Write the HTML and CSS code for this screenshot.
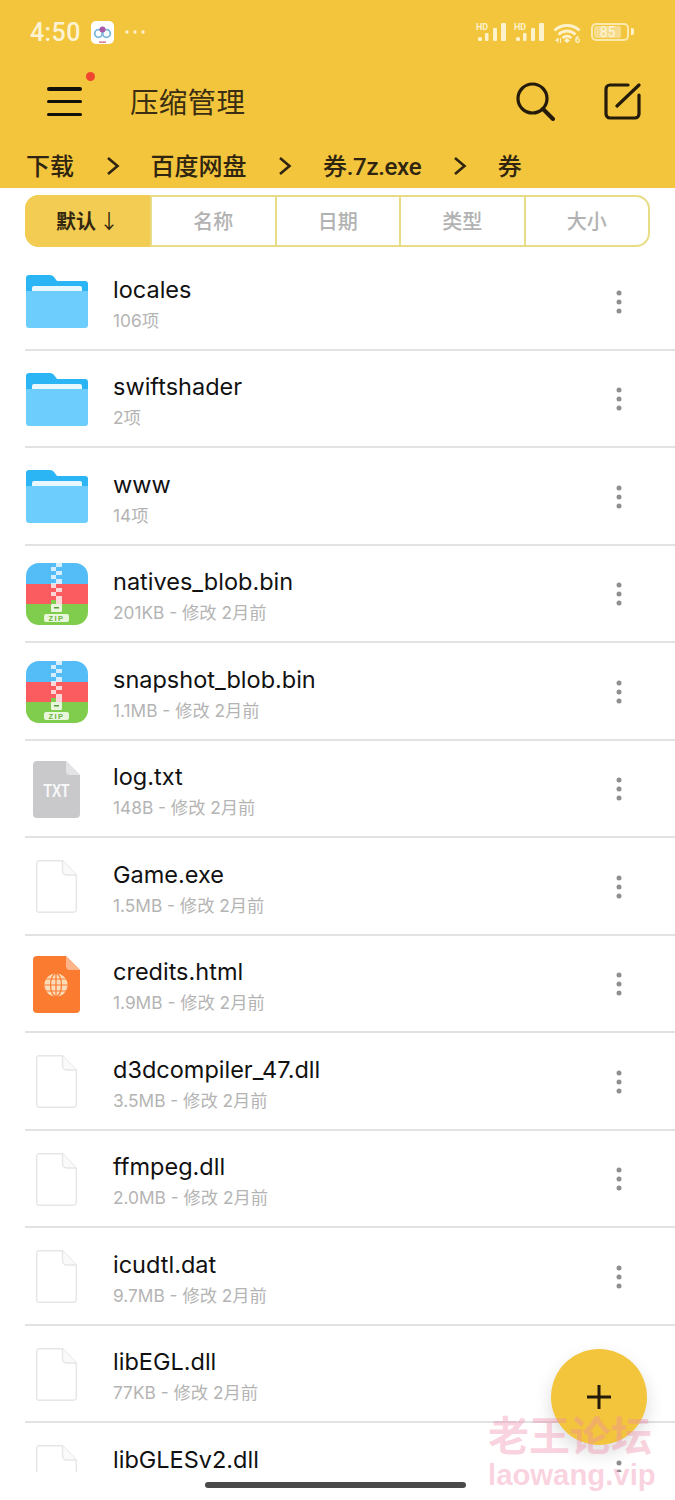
FILE: index.html
```html
<!DOCTYPE html>
<html lang="zh">
<head>
<meta charset="utf-8">
<title>压缩管理</title>
<link rel="stylesheet" href="styles.css">
</head>
<body>
<svg class="sprite" xmlns="http://www.w3.org/2000/svg">
  <symbol id="folder" viewBox="0 0 62 53">
    <path d="M0 3a3 3 0 0 1 3-3h21c2 0 3 1 4 2l3 4h28a3 3 0 0 1 3 3v10H0z" fill="#2cb5f5"/>
    <rect x="6" y="11" width="50" height="10" rx="2" fill="#e9f7fe"/>
    <path d="M0 16h62v34a3 3 0 0 1-3 3H3a3 3 0 0 1-3-3z" fill="#6dcdfd"/>
  </symbol>
  <symbol id="zip" viewBox="0 0 62 62">
    <path d="M13 0h36a13 13 0 0 1 13 13v8H0v-8A13 13 0 0 1 13 0z" fill="#54bdf7"/>
    <rect y="21" width="62" height="21" fill="#fb5c5f"/>
    <path d="M0 41h62v8a13 13 0 0 1-13 13H13A13 13 0 0 1 0 49z" fill="#80cc4d"/>
    <rect x="25" width="11" height="46" fill="#fff" opacity=".75"/>
    <path d="M25 0h5v4h-5zM30 4h6v4h-6zM25 8h5v4h-5zM30 12h6v4h-6zM25 16h5v4h-5z" fill="#54bdf7"/>
    <path d="M30 21h6v4h-6zM25 25h5v4h-5zM30 29h6v4h-6zM25 33h5v4h-5z" fill="#fb5c5f"/>
    <path d="M25 37h5v5h-5z" fill="#80cc4d"/>
    <rect x="25" y="41" width="11" height="8" rx="1" fill="#e8f6dc"/>
    <rect x="28" y="44" width="5" height="1.500" fill="#5a9a3a"/>
    <rect x="18" y="51" width="25" height="8" rx="2" fill="#e8f6dc"/>
    <text x="30.500" y="57.800" class="zip-label">ZIP</text>
  </symbol>
  <symbol id="txt" viewBox="0 0 47 57">
    <path d="M4 0h29l14 14v39a4 4 0 0 1-4 4H4a4 4 0 0 1-4-4V4a4 4 0 0 1 4-4z" fill="#c9c9cc"/>
    <path d="M33 0l14 14H37a4 4 0 0 1-4-4z" fill="#e3e3e5"/>
    <text x="23.500" y="36" class="txt-label" textLength="26" lengthAdjust="spacingAndGlyphs">TXT</text>
  </symbol>
  <symbol id="file" viewBox="0 0 41 53">
    <path d="M3 .7h23.500L40.300 15v34.300a3 3 0 0 1-3 3H3a2.300 2.300 0 0 1-2.300-2.300V3A2.300 2.300 0 0 1 3 .7z" fill="#fff" stroke="#e6e6e6" stroke-width="1.400"/>
    <path d="M26.500.7V11a4 4 0 0 0 4 4h9.800" fill="#fafafa" stroke="#e6e6e6" stroke-width="1.400"/>
  </symbol>
  <symbol id="html" viewBox="0 0 47 57">
    <path d="M4 0h29l14 14v39a4 4 0 0 1-4 4H4a4 4 0 0 1-4-4V4a4 4 0 0 1 4-4z" fill="#fb7b30"/>
    <path d="M33 0l14 14H37a4 4 0 0 1-4-4z" fill="#fdb48a"/>
    <circle cx="23" cy="29" r="11.500" fill="#fbdcb8"/>
    <g fill="none" stroke="#fb7b30" stroke-width="1.200">
      <ellipse cx="23" cy="29" rx="5.500" ry="11.500"/>
      <path d="M23 17.500v23M11.500 29h23M13 23h20M13 35h20"/>
    </g>
  </symbol>
  <symbol id="more" viewBox="0 0 6 24">
    <circle cx="3" cy="3" r="2.500" fill="#8f8f92"/>
    <circle cx="3" cy="12" r="2.500" fill="#8f8f92"/>
    <circle cx="3" cy="21" r="2.500" fill="#8f8f92"/>
  </symbol>
  <symbol id="chev" viewBox="0 0 14 20">
    <path d="M2 2l9.500 8L2 18" fill="none" stroke="#2f2410" stroke-width="2.600"/>
  </symbol>
</svg>

<div class="page">
  <header class="header">
    <div class="status">
      <span class="time">4:50</span>
      <svg class="app-icon" viewBox="0 0 23 23">
        <rect width="23" height="23" rx="5" fill="#fff"/>
        <circle cx="7.500" cy="12.500" r="3.800" fill="none" stroke="#7ab8dc" stroke-width="1.800"/>
        <circle cx="15.500" cy="12.500" r="3.800" fill="none" stroke="#7ab8dc" stroke-width="1.800"/>
        <circle cx="11.500" cy="8.500" r="3" fill="#a85aa8"/>
        <rect x="8" y="20.500" width="7" height="1.200" fill="#c05a70"/>
      </svg>
      <svg class="dots" viewBox="0 0 20 4">
        <circle cx="2" cy="2" r="1.700" fill="#fdf2cc"/>
        <circle cx="10" cy="2" r="1.700" fill="#fdf2cc"/>
        <circle cx="18" cy="2" r="1.700" fill="#fdf2cc"/>
      </svg>
      <span class="status-gap"></span>
      <svg class="signal" viewBox="0 0 31 18">
        <text x="0" y="6.500" class="hd">HD</text>
        <rect x="2" y="14" width="4" height="4" rx="1.500"/>
        <rect x="9" y="10" width="3.500" height="8" rx="1"/>
        <rect x="17" y="5" width="4" height="13" rx="1"/>
        <rect x="25" y="0" width="5" height="18" rx="1"/>
      </svg>
      <svg class="signal signal-last" viewBox="0 0 31 18">
        <text x="0" y="6.500" class="hd">HD</text>
        <rect x="2" y="14" width="4" height="4" rx="1.500"/>
        <rect x="9" y="10" width="3.500" height="8" rx="1"/>
        <rect x="17" y="5" width="4" height="13" rx="1"/>
        <rect x="25" y="0" width="5" height="18" rx="1"/>
      </svg>
      <svg class="wifi" viewBox="0 0 28 20">
        <path d="M1.500 7.500C8.500 .8 19.500 .8 26.500 7.500M5.500 11.500c5-4.700 12-4.700 17 0M9.500 15c2.700-2.300 6.300-2.300 9 0" fill="none" stroke="#fdf2cc" stroke-width="2.800"/>
        <path d="M14 15l3 2.500-3 2.500-3-2.500z" fill="#fdf2cc"/>
        <path d="M5 15l-2.500 2.500H5zM5 15v5M7.500 15v5" stroke="#fdf2cc" fill="none" stroke-width="1"/>
        <text x="22" y="20" class="hd">6</text>
      </svg>
      <span class="battery"><span class="battery-num">85</span></span>
      <span class="battery-cap"></span>
    </div>

    <div class="toolbar">
      <button class="menu" aria-label="menu">
        <span class="menu-line"></span>
        <span class="menu-line"></span>
        <span class="menu-line"></span>
        <span class="badge"></span>
      </button>
      <h1 class="title">压缩管理</h1>
      <svg class="search" viewBox="0 0 39 39">
        <circle cx="16.500" cy="16.500" r="14.500" fill="none" stroke="#241b0a" stroke-width="3.200"/>
        <path d="M27 27l10 10" stroke="#241b0a" stroke-width="4" stroke-linecap="round"/>
      </svg>
      <svg class="edit" viewBox="0 0 37 37">
        <path d="M24 2H6a4 4 0 0 0-4 4v25a4 4 0 0 0 4 4h25a4 4 0 0 0 4-4V12" fill="none" stroke="#241b0a" stroke-width="3.200" stroke-linecap="round"/>
        <path d="M13 23L35 2" stroke="#241b0a" stroke-width="3.200" stroke-linecap="round"/>
      </svg>
    </div>

    <nav class="crumbs">
      <span class="crumb">下载</span>
      <svg class="chev"><use href="#chev"/></svg>
      <span class="crumb">百度网盘</span>
      <svg class="chev"><use href="#chev"/></svg>
      <span class="crumb crumb-file">券.7z.exe</span>
      <svg class="chev"><use href="#chev"/></svg>
      <span class="crumb">券</span>
    </nav>
  </header>

  <div class="tabs">
    <div class="tab tab-active">默认<span class="arrow">↓</span></div>
    <div class="tab">名称</div>
    <div class="tab">日期</div>
    <div class="tab">类型</div>
    <div class="tab">大小</div>
  </div>

  <main class="list">
    <div class="row"><div class="icon"><svg class="i-folder"><use href="#folder"/></svg></div><div class="info"><div class="name">locales</div><div class="sub">106项</div></div><svg class="more"><use href="#more"/></svg></div>
    <div class="row"><div class="icon"><svg class="i-folder"><use href="#folder"/></svg></div><div class="info"><div class="name">swiftshader</div><div class="sub">2项</div></div><svg class="more"><use href="#more"/></svg></div>
    <div class="row"><div class="icon"><svg class="i-folder"><use href="#folder"/></svg></div><div class="info"><div class="name">www</div><div class="sub">14项</div></div><svg class="more"><use href="#more"/></svg></div>
    <div class="row"><div class="icon"><svg class="i-zip"><use href="#zip"/></svg></div><div class="info"><div class="name">natives_blob.bin</div><div class="sub">201KB - 修改 2月前</div></div><svg class="more"><use href="#more"/></svg></div>
    <div class="row"><div class="icon"><svg class="i-zip"><use href="#zip"/></svg></div><div class="info"><div class="name">snapshot_blob.bin</div><div class="sub">1.1MB - 修改 2月前</div></div><svg class="more"><use href="#more"/></svg></div>
    <div class="row"><div class="icon"><svg class="i-doc"><use href="#txt"/></svg></div><div class="info"><div class="name">log.txt</div><div class="sub">148B - 修改 2月前</div></div><svg class="more"><use href="#more"/></svg></div>
    <div class="row"><div class="icon"><svg class="i-file"><use href="#file"/></svg></div><div class="info"><div class="name">Game.exe</div><div class="sub">1.5MB - 修改 2月前</div></div><svg class="more"><use href="#more"/></svg></div>
    <div class="row"><div class="icon"><svg class="i-doc"><use href="#html"/></svg></div><div class="info"><div class="name">credits.html</div><div class="sub">1.9MB - 修改 2月前</div></div><svg class="more"><use href="#more"/></svg></div>
    <div class="row"><div class="icon"><svg class="i-file"><use href="#file"/></svg></div><div class="info"><div class="name">d3dcompiler_47.dll</div><div class="sub">3.5MB - 修改 2月前</div></div><svg class="more"><use href="#more"/></svg></div>
    <div class="row"><div class="icon"><svg class="i-file"><use href="#file"/></svg></div><div class="info"><div class="name">ffmpeg.dll</div><div class="sub">2.0MB - 修改 2月前</div></div><svg class="more"><use href="#more"/></svg></div>
    <div class="row"><div class="icon"><svg class="i-file"><use href="#file"/></svg></div><div class="info"><div class="name">icudtl.dat</div><div class="sub">9.7MB - 修改 2月前</div></div><svg class="more"><use href="#more"/></svg></div>
    <div class="row"><div class="icon"><svg class="i-file"><use href="#file"/></svg></div><div class="info"><div class="name">libEGL.dll</div><div class="sub">77KB - 修改 2月前</div></div><svg class="more"><use href="#more"/></svg></div>
    <div class="row"><div class="icon"><svg class="i-file"><use href="#file"/></svg></div><div class="info"><div class="name">libGLESv2.dll</div><div class="sub"></div></div><svg class="more"><use href="#more"/></svg></div>
  </main>

  <div class="home-area"><span class="home-bar"></span></div>

  <button class="fab" aria-label="add">
    <svg class="fab-plus" viewBox="0 0 26 26"><path d="M13 1v24M1 13h24" stroke="#241b0a" stroke-width="3"/></svg>
  </button>
  <div class="watermark">
    <div class="wm-cn">老王论坛</div>
    <div class="wm-en">laowang.vip</div>
  </div>
</div>
</body>
</html>
```
FILE: styles.css
```css
* { box-sizing: border-box; }
html, body { margin: 0; padding: 0; background: #fff; }
body { font-family: Inter, "Noto Sans CJK SC", sans-serif; }
.sprite { display: none; }
.zip-label {
  font: 700 7.500px "Liberation Sans", sans-serif;
  letter-spacing: 1.500px;
  fill: #6bb53e;
  text-anchor: middle;
}
.txt-label {
  font: 700 19px "Liberation Sans", sans-serif;
  fill: #f8f8f8;
  text-anchor: middle;
}
.page {
  position: relative;
  width: 675px;
  height: 1500px;
  overflow: hidden;
  display: flex;
  flex-direction: column;
  background: #fff;
}

.header {
  height: 188px;
  flex: none;
  background: #f2c53d;
  display: flex;
  flex-direction: column;
}
.status {
  height: 63px;
  padding: 21px 41px 0 30px;
  display: flex;
  align-items: flex-start;
}
.time {
  font-family: Roboto, sans-serif;
  font-size: 25px;
  font-weight: 500;
  line-height: 23px;
  color: #fdf3d2;
  width: 61px;
  letter-spacing: .4px;
}
.app-icon { width: 23px; height: 23px; }
.dots { width: 20px; height: 4px; margin: 9px 0 0 11px; }
.status-gap { flex: 1; }
.signal { width: 31px; height: 18px; margin: 2px 7px 0 0; fill: #fdf2cc; overflow: visible; }
.signal-last { margin-right: 8px; }
.hd { font: 700 9px Roboto, sans-serif; fill: #fdf2cc; }
.wifi { width: 28px; height: 20px; margin: 2px 10px 0 0; overflow: visible; }
.battery {
  width: 38px;
  height: 18px;
  margin-top: 2px;
  border: 2px solid #fbe9ae;
  border-radius: 5px;
  padding: 1px;
  display: flex;
}
.battery-num {
  flex: none;
  width: 27px;
  background: #f7dc8e;
  border-radius: 2px;
  color: #fdf6dc;
  font: 14px/12px Roboto, sans-serif;
  text-align: center;
}
.battery-cap {
  width: 3px;
  height: 7px;
  background: #fdf2cc;
  margin: 7px 0 0 2px;
  border-radius: 0 2px 2px 0;
}

.toolbar {
  height: 77px;
  display: flex;
  align-items: center;
  padding: 0 34px 0 47px;
}
.menu {
  position: relative;
  width: 35px;
  height: 29px;
  padding: 0;
  border: 0;
  background: none;
  display: flex;
  flex-direction: column;
  justify-content: space-between;
  margin-right: 48px;
}
.menu-line {
  display: block;
  height: 3.500px;
  border-radius: 2px;
  background: #14100a;
}
.badge {
  position: absolute;
  top: -15px;
  right: -13px;
  width: 9px;
  height: 9px;
  border-radius: 50%;
  background: #f0452f;
}
.title {
  flex: 1;
  margin: 0 0 2px;
  font-family: "Noto Sans CJK SC", sans-serif;
  font-size: 28.500px;
  font-weight: 400;
  letter-spacing: .3px;
  color: #3b2e12;
}
.search { width: 39px; height: 39px; margin-right: 49px; }
.edit { width: 37px; height: 37px; }

.crumbs {
  height: 48px;
  display: flex;
  align-items: flex-start;
  padding: 9px 0 0 26px;
  color: #2f2410;
}
.crumb {
  font-size: 24px;
  line-height: 36px;
  font-weight: 500;
  font-family: Roboto, "Noto Sans CJK SC", sans-serif;
}
.crumb-file { letter-spacing: -.3px; }
.chev { width: 14px; height: 20px; margin: 7px 31px 0 31.500px; }

.tabs {
  flex: none;
  height: 52px;
  margin: 7px 25px 6px;
  display: flex;
  border: 2px solid #e9dc86;
  border-radius: 14px;
}
.tab {
  flex: 1;
  display: flex;
  align-items: center;
  justify-content: center;
  padding-bottom: 2px;
  font-family: "Noto Sans CJK SC", sans-serif;
  font-size: 20px;
  font-weight: 500;
  color: #b2b2b2;
  border-left: 2px solid #e9dc86;
}
.tab-active {
  flex: none;
  width: 125px;
  margin: -2px 0 -2px -2px;
  border-left: 0;
  border-radius: 14px 0 0 14px;
  background: #f3cd53;
  color: #33280f;
  font-weight: 700;
}
.arrow { font-weight: 400; font-size: 20px; margin-left: 3px; }

.list {
  flex: none;
  height: 1219px;
  overflow: hidden;
  display: grid;
  grid-auto-rows: 97.500px;
}
.row {
  margin-left: 25px;
  padding-top: 2px;
  display: flex;
  align-items: center;
  border-bottom: 2px solid #e2e2e2;
}
.icon {
  flex: none;
  width: 63px;
  margin-right: 25px;
  display: flex;
  justify-content: center;
}
.i-folder { width: 62px; height: 53px; }
.i-zip { width: 62px; height: 62px; }
.i-doc { width: 47px; height: 57px; }
.i-file { width: 41px; height: 53px; }
.info { flex: 1; min-width: 0; padding-top: 4px; }
.name {
  font-size: 23.500px;
  line-height: 31px;
  color: #111;
}
.sub {
  min-height: 26px;
  font-size: 17.300px;
  line-height: 26px;
  margin-top: 3px;
  color: #b4b4b4;
}
.more { flex: none; width: 6px; height: 24px; margin-right: 53px; }

.home-area {
  flex: 1;
  display: flex;
  justify-content: center;
  padding: 10px 4px 0 0;
  background: #fff;
}
.home-bar {
  width: 261px;
  height: 6px;
  border-radius: 3px;
  background: #4a4a4a;
}

.fab {
  position: absolute;
  left: 551px;
  top: 1349px;
  width: 96px;
  height: 96px;
  border: 0;
  padding: 0;
  border-radius: 50%;
  background: #f2c53d;
  box-shadow: 0 8px 18px rgba(0, 0, 0, .14);
  display: flex;
  align-items: center;
  justify-content: center;
}
.fab-plus { width: 26px; height: 26px; }

.watermark {
  position: absolute;
  left: 488px;
  top: 1409px;
  color: rgba(240, 140, 170, .38);
  font-weight: 700;
  pointer-events: none;
}
.wm-cn {
  font-family: "Noto Sans CJK SC", sans-serif;
  font-size: 41px;
  line-height: 48px;
}
.wm-en {
  margin-top: 2px;
  font-family: "Liberation Sans", sans-serif;
  font-size: 29.300px;
  line-height: 32px;
}
```
